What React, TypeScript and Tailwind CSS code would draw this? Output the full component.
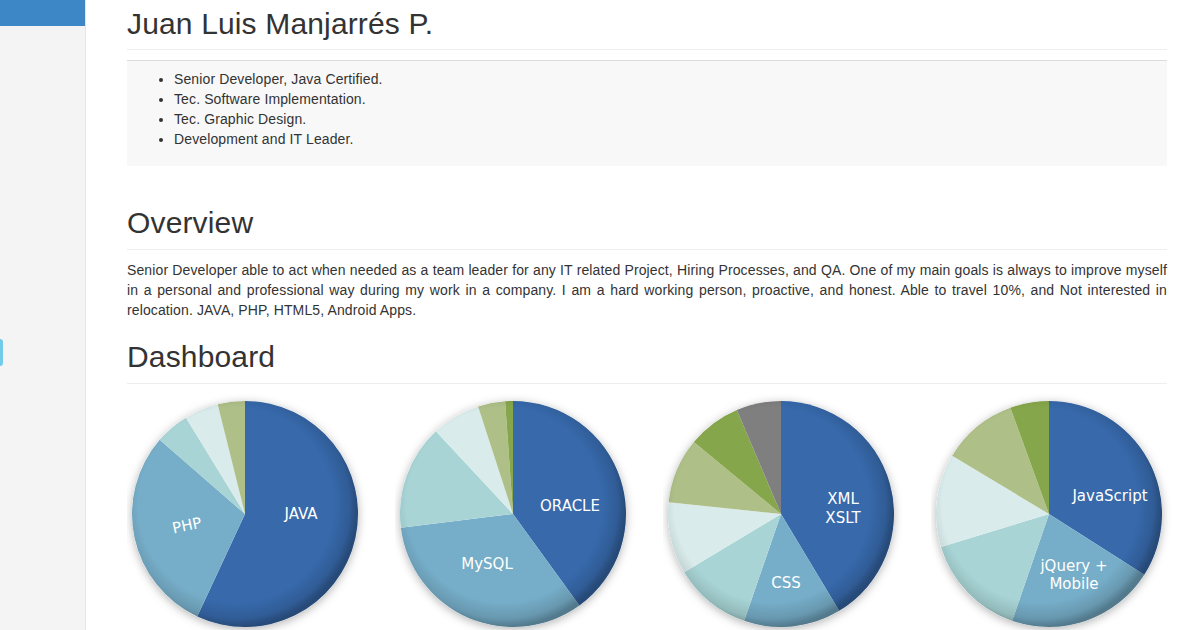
import React from 'react';

type Slice = [number, number, string];
type Label = { text: string; x: number; y: number; rotate?: number };

const BLUE = '#3769ab';
const PHP = '#76adc8';
const TEAL = '#a8d4d5';
const LIGHT = '#d9ebeb';
const OLIVE = '#aebf88';
const GREEN = '#86a64b';
const GRAY = '#7f7f7f';

const CX = 118;
const CY = 120;
const R = 113;

const pt = (deg: number) => {
  const a = (deg * Math.PI) / 180;
  return [CX + R * Math.sin(a), CY - R * Math.cos(a)];
};

const arc = (from: number, to: number) => {
  const [x1, y1] = pt(from);
  const [x2, y2] = pt(to);
  const large = to - from > 180 ? 1 : 0;
  return `M${CX},${CY} L${x1},${y1} A${R},${R} 0 ${large} 1 ${x2},${y2} Z`;
};

const pies: { id: string; slices: Slice[]; labels: Label[] }[] = [
  {
    id: 'p1',
    slices: [
      [0, 205, BLUE],
      [205, 311, PHP],
      [311, 328.5, TEAL],
      [328.5, 346, LIGHT],
      [346, 360, OLIVE],
    ],
    labels: [
      { text: 'JAVA', x: 56, y: 0 },
      { text: 'PHP', x: -58, y: 12, rotate: -12 },
    ],
  },
  {
    id: 'p2',
    slices: [
      [0, 144, BLUE],
      [144, 263, PHP],
      [263, 317, TEAL],
      [317, 342, LIGHT],
      [342, 356, OLIVE],
      [356, 360, GREEN],
    ],
    labels: [
      { text: 'ORACLE', x: 57, y: -8 },
      { text: 'MySQL', x: -26, y: 50 },
    ],
  },
  {
    id: 'p3',
    slices: [
      [0, 149, BLUE],
      [149, 199, PHP],
      [199, 239, TEAL],
      [239, 276, LIGHT],
      [276, 309.5, OLIVE],
      [309.5, 337, GREEN],
      [337, 360, GRAY],
    ],
    labels: [
      { text: 'XML', x: 62, y: -15 },
      { text: 'XSLT', x: 62, y: 4 },
      { text: 'CSS', x: 5, y: 69 },
    ],
  },
  {
    id: 'p4',
    slices: [
      [0, 122.5, BLUE],
      [122.5, 199, PHP],
      [199, 253, TEAL],
      [253, 301, LIGHT],
      [301, 340, OLIVE],
      [340, 360, GREEN],
    ],
    labels: [
      { text: 'JavaScript', x: 61, y: -18 },
      { text: 'jQuery +', x: 25, y: 52 },
      { text: 'Mobile', x: 25, y: 70 },
    ],
  },
];

const Pie = ({ id, slices, labels }: { id: string; slices: Slice[]; labels: Label[] }) => (
  <svg width="240" height="236" viewBox="0 0 240 236" className="shrink-0">
    <defs>
      <filter id={`${id}-sh`} x="-20%" y="-20%" width="140%" height="140%">
        <feDropShadow dx="0" dy="2" stdDeviation="5" floodColor="#000" floodOpacity="0.3" />
      </filter>
      <radialGradient id={`${id}-rim`} cx="46%" cy="46%" r="54%">
        <stop offset="80%" stopColor="#000" stopOpacity="0" />
        <stop offset="93%" stopColor="#000" stopOpacity="0.12" />
        <stop offset="100%" stopColor="#000" stopOpacity="0.3" />
      </radialGradient>
    </defs>
    <circle cx={CX} cy={CY} r={R} fill="#fff" filter={`url(#${id}-sh)`} />
    {slices.map(([a, b, c], i) => (
      <path key={i} d={arc(a, b)} fill={c} />
    ))}
    <circle cx={CX} cy={CY} r={R} fill={`url(#${id}-rim)`} />
    {labels.map((l) => (
      <text
        key={l.text}
        x={CX + l.x}
        y={CY + l.y}
        textAnchor="middle"
        dominantBaseline="middle"
        fill="#fff"
        fontSize="15"
        transform={l.rotate ? `rotate(${l.rotate} ${CX + l.x} ${CY + l.y})` : undefined}
        style={{ fontFamily: '"DejaVu Sans", Verdana, sans-serif' }}
      >
        {l.text}
      </text>
    ))}
  </svg>
);

export default function App() {
  return (
    <div className="relative flex h-[630px] w-[1200px] overflow-hidden bg-white font-['Liberation_Sans',Arial,sans-serif] text-[#333]">
      {/* sidebar */}
      <aside className="w-[86px] shrink-0 border-r border-[#e6e6e6] bg-[#f4f4f4]">
        <div className="h-[26px] bg-[#3d87c6]" />
      </aside>
      <div className="absolute left-0 top-[339px] h-[27px] w-[3px] rounded-r-sm bg-[#72cbe8]" />

      <main className="w-[1040px] shrink-0 pl-[41px] box-content">
        <h1 className="mt-[7px] border-b border-[#eee] pb-[9px] text-[30px] font-normal leading-[33px] tracking-[0.15px]">
          Juan Luis Manjarrés P.
        </h1>

        <div className="mt-[10px] border-t border-[#ddd] bg-[#f8f8f8] pb-[17px] pt-[8px]">
          <ul className="list-disc pl-[47px] text-[14px] leading-[20px] tracking-[0.12px]">
            <li>Senior Developer, Java Certified.</li>
            <li>Tec. Software Implementation.</li>
            <li>Tec. Graphic Design.</li>
            <li>Development and IT Leader.</li>
          </ul>
        </div>

        <h2 className="mt-[40px] border-b border-[#eee] pb-[10px] text-[30px] font-normal leading-[33px] tracking-[0.15px]">
          Overview
        </h2>
        <p className="mt-[10px] text-justify text-[14px] leading-[20px] tracking-[0.12px]">
          Senior Developer able to act when needed as a team leader for any IT related Project, Hiring Processes, and QA. One of my main goals is always to improve myself in a personal and professional way during my work in a company. I am a hard working person, proactive, and honest. Able to travel 10%, and Not interested in relocation. JAVA, PHP, HTML5, Android Apps.
        </p>

        <h2 className="mt-[20px] border-b border-[#eee] pb-[10px] text-[30px] font-normal leading-[33px] tracking-[0.15px]">
          Dashboard
        </h2>
        <div className="mt-[10px] flex gap-[28px]">
          {pies.map((p) => (
            <Pie key={p.id} {...p} />
          ))}
        </div>
      </main>
    </div>
  );
}
